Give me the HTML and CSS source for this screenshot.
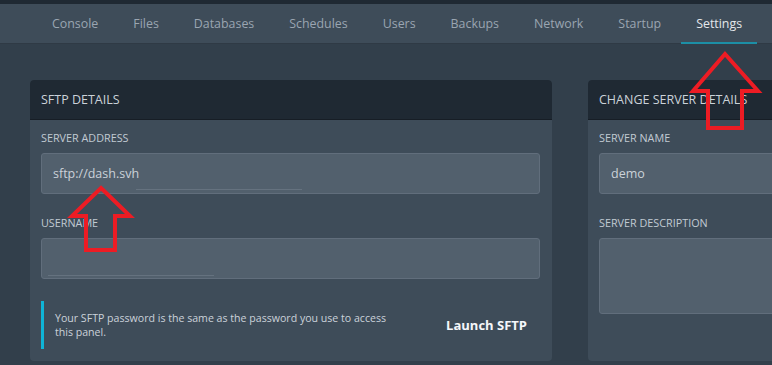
FILE: index.html
```html
<!DOCTYPE html>
<html lang="en">
<head>
    <meta charset="UTF-8">
    <meta name="viewport" content="width=device-width, initial-scale=1.0">
    <title>Server Settings</title>
    <link rel="stylesheet" href="styles.css">
</head>
<body>

<div class="topbar"></div>
<nav class="subnav">
    <a href="#">Console</a>
    <a href="#">Files</a>
    <a href="#">Databases</a>
    <a href="#">Schedules</a>
    <a href="#">Users</a>
    <a href="#">Backups</a>
    <a href="#">Network</a>
    <a href="#">Startup</a>
    <a href="#" class="active">Settings</a>
</nav>

<div class="content">
    <div class="card">
        <div class="card-header">SFTP Details</div>
        <div class="card-body">
            <label>Server Address</label>
            <div class="input">
                sftp://dash.svh
                <span class="smudge smudge-address"></span>
            </div>

            <label>Username</label>
            <div class="input">
                <span class="smudge smudge-user"></span>
            </div>

            <div class="info-row">
                <div class="notice">Your SFTP password is the same as the password you use to access this panel.</div>
                <button class="launch">Launch SFTP</button>
            </div>
        </div>
    </div>

    <div class="card">
        <div class="card-header">Change Server Details</div>
        <div class="card-body">
            <label>Server Name</label>
            <div class="input">demo</div>

            <label>Server Description</label>
            <div class="input textarea"></div>
        </div>
    </div>
</div>

<!-- red annotation arrows drawn over the screenshot -->
<svg class="marks" width="772" height="365" viewBox="0 0 772 365">
    <polygon points="725,54 758,91 742,91 742,128 708,128 708,91 693,91" />
    <polygon points="101,188 130,216 115,216 115,250 86,250 86,216 72,216" />
</svg>

</body>
</html>
```

FILE: styles.css
```css
body {
    font-family: "Open Sans", "Noto Sans", sans-serif;
    background-color: #323f4b;
    margin: 0;
    width: 772px;
    height: 365px;
    overflow: hidden;
    position: relative;
}
.topbar {
    height: 4px;
    background-color: #1f2933;
}
.subnav {
    display: flex;
    gap: 5px;
    height: 39px;
    padding-left: 37px;
    background-color: #3e4c59;
    border-bottom: 1px solid #2f3a45;
}
.subnav a {
    display: flex;
    align-items: center;
    padding: 1px 15px 0;
    font-size: 12.4px;
    color: #9aa5b1;
    text-decoration: none;
    border-bottom: 2px solid transparent;
    margin-bottom: -1px;
}
.subnav a.active {
    color: #e4e7eb;
    border-bottom-color: #1c8fa6;
}
.content {
    display: grid;
    grid-template-columns: 522px 522px;
    gap: 36px;
    padding: 36px 0 0 30px;
}
.card {
    background-color: #3e4c59;
    border-radius: 4px;
    overflow: hidden;
    height: 281px;
}
.card-header {
    height: 39px;
    line-height: 39px;
    padding-left: 11px;
    background-color: #1f2933;
    border-bottom: 1px solid #171e26;
    color: #cbd2d9;
    font-size: 12.5px;
    text-transform: uppercase;
}
.card-body {
    padding: 10px 12px 9px 11px;
}
label {
    display: block;
    font-size: 10.8px;
    line-height: 16px;
    color: #c1cad3;
    text-transform: uppercase;
    margin-bottom: 7px;
}
.input {
    position: relative;
    height: 39px;
    line-height: 39px;
    padding-left: 11px;
    background-color: #52606d;
    border: 1px solid #616e7c;
    border-radius: 3px;
    color: #cbd2d9;
    font-size: 12.5px;
    margin-bottom: 21px;
}
.input.textarea {
    height: 74px;
}
.smudge {
    position: absolute;
    height: 1px;
    background-color: #65727f;
}
.smudge-address {
    left: 94px;
    width: 166px;
    bottom: 3px;
}
.smudge-user {
    left: 6px;
    width: 166px;
    bottom: 2px;
}
.info-row {
    display: flex;
    align-items: center;
    margin-top: 22px;
}
.notice {
    flex: 1;
    border-left: 3px solid #0fb4d6;
    padding: 10px 40px 10px 11px;
    font-size: 10.6px;
    line-height: 14px;
    color: #cbd2d9;
}
.launch {
    background: none;
    border: none;
    padding: 0 13px 0 0;
    font-family: inherit;
    font-size: 13px;
    font-weight: bold;
    color: #f5f7fa;
    cursor: pointer;
}
.marks {
    position: absolute;
    top: 0;
    left: 0;
    pointer-events: none;
}
.marks polygon {
    fill: none;
    stroke: #ed1c24;
    stroke-width: 4;
    stroke-linejoin: miter;
}
```
